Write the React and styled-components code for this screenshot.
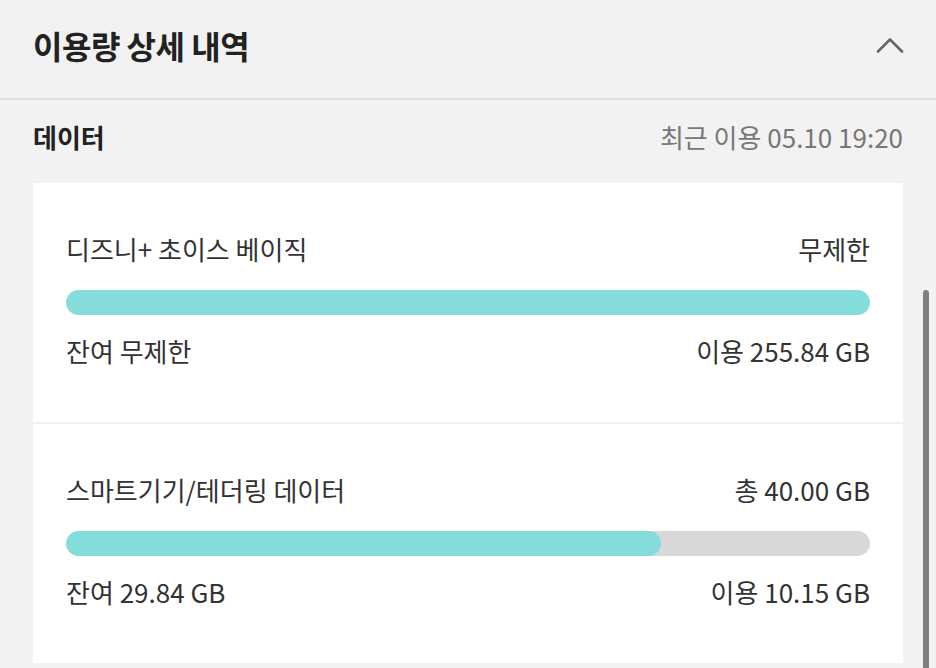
import React from 'react';
import styled, { createGlobalStyle } from 'styled-components';

const GlobalStyle = createGlobalStyle`
  html, body {
    margin: 0;
    padding: 0;
    background: #f2f2f2;
    overflow: hidden;
  }
  body {
    font-family: "Noto Sans CJK KR", "Noto Sans", sans-serif;
    color: #333;
  }
`;

const usage = [
  {
    name: '디즈니+ 초이스 베이직',
    total: '무제한',
    remain: '잔여 무제한',
    used: '이용 255.84 GB',
    ratio: 1,
  },
  {
    name: '스마트기기/테더링 데이터',
    total: '총 40.00 GB',
    remain: '잔여 29.84 GB',
    used: '이용 10.15 GB',
    ratio: 0.74,
  },
];

function ChevronUp() {
  return (
    <svg width="28" height="16" viewBox="0 0 28 16" fill="none">
      <path
        d="M2 14.5 L14 2.5 L26 14.5"
        stroke="#666"
        strokeWidth="2.6"
        strokeLinecap="round"
        strokeLinejoin="round"
      />
    </svg>
  );
}

function UsageItem({ item }) {
  return (
    <Section>
      <Row>
        <span>{item.name}</span>
        <span>{item.total}</span>
      </Row>
      <Track>
        <Fill style={{ width: `${item.ratio * 100}%` }} />
      </Track>
      <Row>
        <span>{item.remain}</span>
        <span>{item.used}</span>
      </Row>
    </Section>
  );
}

export default function App() {
  return (
    <Page>
      <GlobalStyle />
      <Header>
        <Title>이용량 상세 내역</Title>
        <Toggle type="button" aria-label="접기">
          <ChevronUp />
        </Toggle>
      </Header>
      <Content>
        <SubHeader>
          <SubTitle>데이터</SubTitle>
          <LastUsed>최근 이용 05.10 19:20</LastUsed>
        </SubHeader>
        <Card>
          {usage.map((item) => (
            <UsageItem key={item.name} item={item} />
          ))}
        </Card>
      </Content>
      <ScrollThumb />
    </Page>
  );
}

const Page = styled.div`
  position: relative;
  width: 936px;
  height: 668px;
  overflow: hidden;
  background: #f2f2f2;
`;

const Header = styled.div`
  display: flex;
  align-items: center;
  justify-content: space-between;
  height: 100px;
  padding: 0 33px 8px;
  box-sizing: border-box;
  border-bottom: 2px solid #dedede;
`;

const Title = styled.h2`
  margin: 0;
  font-size: 32px;
  font-weight: 700;
  color: #222;
  letter-spacing: -0.5px;
`;

const Toggle = styled.button`
  display: flex;
  padding: 0;
  border: 0;
  background: transparent;
  margin-right: -1px;
`;

const Content = styled.div`
  padding: 0 33px;
`;

const SubHeader = styled.div`
  display: flex;
  align-items: center;
  justify-content: space-between;
  height: 83px;
  padding-bottom: 11px;
  box-sizing: border-box;
`;

const SubTitle = styled.h3`
  margin: 0;
  font-size: 26px;
  font-weight: 700;
  color: #222;
`;

const LastUsed = styled.span`
  font-size: 26px;
  color: #777;
`;

const Card = styled.div`
  background: #fff;
  display: flex;
  flex-direction: column;
`;

const Section = styled.div`
  display: flex;
  flex-direction: column;
  padding: 49px 33px 54px;
  & + & {
    border-top: 2px solid #f0f0f0;
  }
`;

const Row = styled.div`
  display: flex;
  justify-content: space-between;
  align-items: center;
  font-size: 26px;
  line-height: 34px;
  color: #333;
`;

const Track = styled.div`
  height: 25px;
  margin: 24px 0 19px;
  border-radius: 13px;
  background: #d8d8d8;
  overflow: hidden;
`;

const Fill = styled.div`
  height: 100%;
  border-radius: 13px;
  background: #84dcdb;
`;

const ScrollThumb = styled.div`
  position: absolute;
  left: 923px;
  top: 290px;
  width: 6px;
  height: 400px;
  border-radius: 3px;
  background: #808080;
`;
